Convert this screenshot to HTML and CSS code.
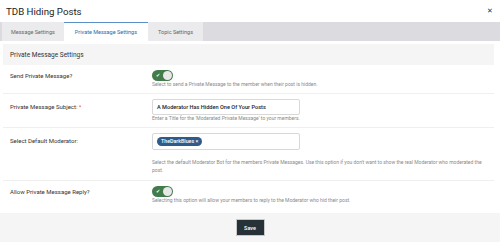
FILE: index.html
```html
<!DOCTYPE html>
<html lang="en">
  <head>
    <meta charset="UTF-8" />
    <title>TDB Hiding Posts</title>
    <link rel="stylesheet" href="styles.css">
  </head>
  <body>
    <div class="modal">
      <div class="modal-head">
        <h1>TDB Hiding Posts</h1>
        <span class="close">&#x2715;</span>
      </div>

      <div class="tabs">
        <div class="tab">Message Settings</div>
        <div class="tab active">Private Message Settings</div>
        <div class="tab">Topic Settings</div>
      </div>

      <div class="content">
        <div class="section-title">Private Message Settings</div>

        <div class="row">
          <div class="label">Send Private Message?</div>
          <div class="field">
            <span class="toggle"><span class="check">&#10004;</span><span class="knob"></span></span>
            <div class="help">Select to send a Private Message to the member when their post is hidden.</div>
          </div>
        </div>

        <div class="row">
          <div class="label pad">Private Message Subject: <span class="req">*</span></div>
          <div class="field">
            <div class="input">A Moderator Has Hidden One Of Your Posts</div>
            <div class="help">Enter a Title for the 'Moderated Private Message' to your members.</div>
          </div>
        </div>

        <div class="row">
          <div class="label pad">Select Default Moderator:</div>
          <div class="field">
            <div class="input tags"><span class="tag">TheDarkBlues &times;</span></div>
            <div class="help wide">Select the default Moderator Bot for the members Private Messages. Use this option if you don't want to show the real Moderator who moderated the post.</div>
          </div>
        </div>

        <div class="row last">
          <div class="label">Allow Private Message Reply?</div>
          <div class="field">
            <span class="toggle"><span class="check">&#10004;</span><span class="knob"></span></span>
            <div class="help">Selecting this option will allow your members to reply to the Moderator who hid their post.</div>
          </div>
        </div>
      </div>

      <div class="footer">
        <button type="button">Save</button>
      </div>
    </div>
  </body>
</html>
```

FILE: styles.css
```css
body {
  margin: 0;
  font-family: Roboto, "Liberation Sans", sans-serif;
  background: #fff;
  color: #333;
}
.modal {
  width: 500px;
}
.modal-head {
  height: 22px;
  display: flex;
  align-items: center;
  justify-content: space-between;
  padding: 0 7px 0 6px;
}
.modal-head h1 {
  margin: 0;
  font-size: 9.7px;
  font-weight: 400;
  color: #222;
}
.close {
  font-size: 7px;
  color: #333;
}
.tabs {
  height: 19px;
  background: #dcdce0;
  display: flex;
  padding-left: 2px;
}
.tab {
  padding: 0 9px;
  font-size: 5.5px;
  color: #666;
  background: #ebebed;
  display: flex;
  align-items: center;
}
.tab + .tab + .tab {
  padding: 0 10px;
}
.tab.active {
  background: #fff;
  color: #2d6aa8;
  border-top: 1px solid #5b8fc7;
  padding: 0 11px;
}
.content {
  padding: 3px 6px 4px 3px;
}
.section-title {
  height: 21px;
  background: #f5f5f5;
  font-size: 6.5px;
  color: #333;
  display: flex;
  align-items: center;
  padding-left: 7px;
}
.row {
  display: flex;
  border-bottom: 1px solid #efefef;
  padding: 5px 0 6px 7px;
}
.row.last {
  border-bottom: none;
}
.label {
  width: 142px;
  font-size: 6px;
  line-height: 11px;
  color: #333;
}
.label.pad {
  padding-top: 2px;
}
.req {
  color: #d9534f;
}
.field {
  flex: 1;
}
.toggle {
  position: relative;
  display: block;
  width: 21px;
  height: 11px;
  border-radius: 6px;
  background: #437c4a;
}
.check {
  position: absolute;
  left: 4px;
  top: 1px;
  font-size: 5px;
  line-height: 9px;
  color: #fff;
}
.knob {
  position: absolute;
  right: 1px;
  top: 1px;
  width: 9px;
  height: 9px;
  border-radius: 50%;
  background: #e8e8e8;
}
.input {
  width: 142px;
  height: 14px;
  border: 1px solid #d8d8d8;
  border-radius: 2px;
  font-size: 5.6px;
  font-weight: 500;
  color: #222;
  display: flex;
  align-items: center;
  padding-left: 4px;
}
.tags {
  height: 15px;
}
.tag {
  background: #2f5b8c;
  color: #fff;
  font-size: 5.3px;
  line-height: 9px;
  border-radius: 5px;
  padding: 0 4px;
}
.help {
  font-size: 5px;
  color: #8a8a8a;
  line-height: 6px;
}
.help.wide {
  margin-top: 8px;
  line-height: 8px;
  width: 338px;
}
.footer {
  height: 29px;
  background: #f5f5f5;
  display: flex;
  justify-content: center;
  align-items: center;
}
.footer button {
  width: 29px;
  height: 17px;
  background: #263238;
  color: #fff;
  border: 1px solid #c9c9c9;
  border-radius: 1px;
  font-family: Roboto, sans-serif;
  font-size: 5.5px;
  font-weight: 500;
  padding: 0;
}
```
